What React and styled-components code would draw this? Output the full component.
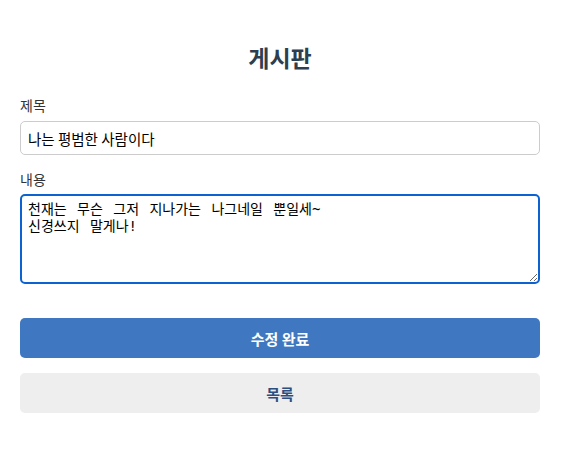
import React, { useEffect, useRef } from 'react';
import styled, { createGlobalStyle } from 'styled-components';

const GlobalStyle = createGlobalStyle`
  body {
    margin: 0;
    background: #fff;
    font-family: "Noto Sans CJK KR", "Noto Sans", sans-serif;
  }
`;

const Page = styled.div`
  width: 520px;
  padding: 20px;
`;

const Title = styled.h2`
  margin: 22px 0 23px;
  text-align: center;
  font-size: 23px;
  line-height: 30px;
  font-weight: 700;
  color: #2c3e50;
`;

const Group = styled.div`
  margin-bottom: ${({ last }) => (last ? '34px' : '14px')};
`;

const Label = styled.label`
  display: block;
  margin-bottom: ${({ gap }) => gap || 6}px;
  font-size: 14px;
  line-height: 20px;
  color: #333;
`;

const Input = styled.input`
  display: block;
  box-sizing: border-box;
  width: 100%;
  height: 34px;
  padding: 0 7px;
  border: 1px solid #ccc;
  border-radius: 5px;
  font-family: inherit;
  font-size: 14.5px;
  color: #000;
  outline: none;
`;

const TextArea = styled.textarea`
  display: block;
  box-sizing: border-box;
  width: 100%;
  height: 90px;
  padding: 5px 6px;
  border: 2px solid #0b62d0;
  border-radius: 5px;
  font-family: "DejaVu Sans Mono", "Noto Sans CJK KR", monospace;
  font-size: 14px;
  line-height: 17px;
  word-spacing: 2px;
  color: #000;
  outline: none;
  resize: both;
`;

const Button = styled.button`
  display: block;
  width: 100%;
  height: 40px;
  margin-bottom: 15px;
  border: none;
  border-radius: 5px;
  background: ${({ primary }) => (primary ? '#3f78c0' : '#eeeeee')};
  color: ${({ primary }) => (primary ? '#fff' : '#2b4f80')};
  font-family: inherit;
  font-size: 15px;
  font-weight: 700;
  cursor: pointer;
`;

const App = () => {
  const areaRef = useRef(null);

  useEffect(() => {
    const el = areaRef.current;
    if (el) {
      el.focus();
      el.setSelectionRange(el.value.length, el.value.length);
    }
  }, []);

  return (
    <Page>
      <GlobalStyle />
      <Title>게시판</Title>
      <Group>
        <Label>제목</Label>
        <Input defaultValue="나는 평범한 사람이다" />
      </Group>
      <Group last>
        <Label gap={5}>내용</Label>
        <TextArea
          ref={areaRef}
          defaultValue={'천재는 무슨 그저 지나가는 나그네일 뿐일세~\n신경쓰지 말게나!'}
        />
      </Group>
      <Button primary>수정 완료</Button>
      <Button>목록</Button>
    </Page>
  );
};

export default App;
